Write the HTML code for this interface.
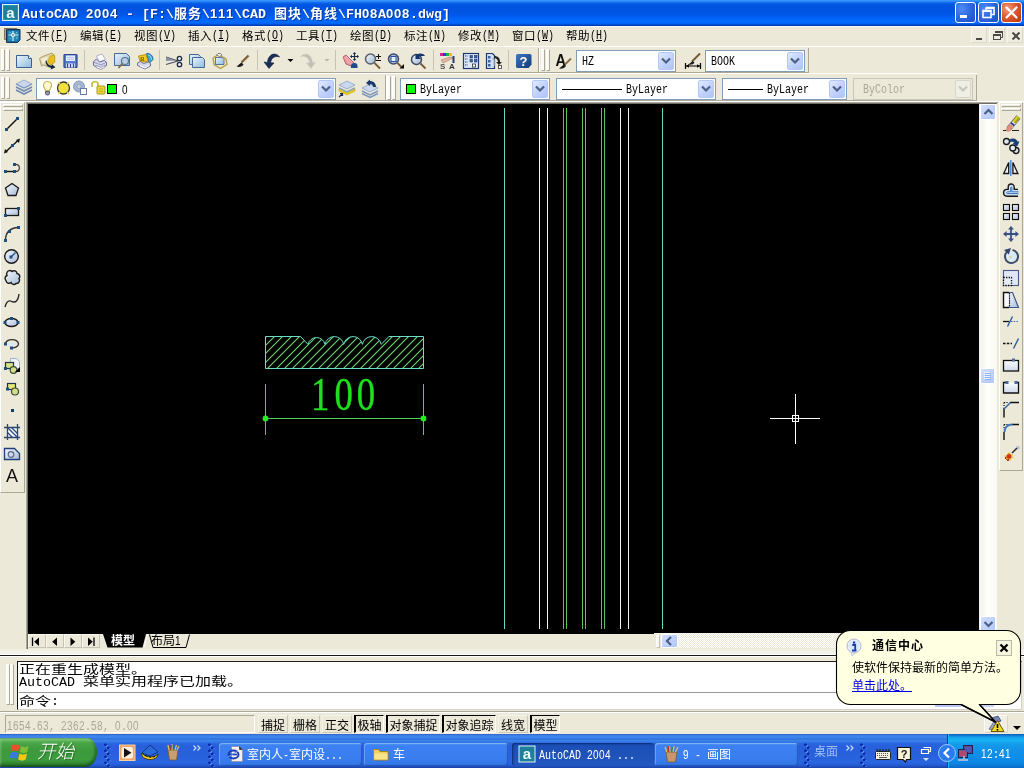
<!DOCTYPE html>
<html lang="zh-CN">
<head>
<meta charset="utf-8">
<title>AutoCAD 2004 - [F:\服务\111\CAD 图块\角线\FH08A008.dwg]</title>
<style>
*{box-sizing:border-box;margin:0;padding:0}
html,body{width:1024px;height:768px;overflow:hidden;background:#ECE9D8}
body{position:relative;font:12px/12px "Liberation Sans","Noto Sans CJK SC","WenQuanYi Zen Hei",sans-serif;color:#000;-webkit-font-smoothing:antialiased}
.a{position:absolute}
.m{font-family:"Liberation Mono","Noto Sans CJK SC","WenQuanYi Zen Hei",monospace}
svg{position:absolute;overflow:visible}
/* title bar */
#title{left:0;top:0;width:1024px;height:26px;background:linear-gradient(to bottom,#3c97ff 0px,#3391fd 1px,#1470f0 2.500px,#0458e4 4px,#0054e0 6px,#0054e1 11px,#0057e8 14px,#005ef4 17px,#0467fd 20px,#066bff 22px,#0462f6 23.500px,#0050d6 24.500px,#003cb4 25.500px,#0036aa 26px)}
#title .t{left:22px;top:5px;height:16px;line-height:16px;color:#fff;font-weight:bold;font-size:13.33px;white-space:pre;letter-spacing:0;text-shadow:1px 1px 0 rgba(10,30,100,.6)}
#title .t b{font-size:13px;letter-spacing:1px;font-weight:bold;font-family:"Noto Sans CJK SC",sans-serif}
.tb{top:2px;width:21px;height:21px;border-radius:3px;border:1px solid #fff;background:radial-gradient(circle at 30% 30%,#4f8bf5 0%,#2a62e0 55%,#1f4fc5 100%)}
.tb.x{background:radial-gradient(circle at 30% 30%,#f0a080 0%,#e0572f 45%,#c03010 100%)}
/* menu */
#menu{left:0;top:26px;width:1024px;height:20px;background:#ECE9D8}
#menu .i{top:4px;height:12px;line-height:12px;white-space:pre;font-size:11.500px;letter-spacing:.5px}
#menu .i .l{position:relative;top:-1px}
#menu .i u{text-decoration:underline;text-underline-offset:1px}
.l,.tl{display:inline-block;font-family:"Liberation Mono",monospace;font-size:12px;letter-spacing:0;transform:scaleX(.8333);transform-origin:0 50%;white-space:pre}
/* toolbars */
.bar{background:#ECE9D8}
.hl{background:#fff}
.sh{background:#ACA899}
.grip{width:4px;border-left:1px solid #fff;border-top:1px solid #fff;border-right:1px solid #ACA899;border-bottom:1px solid #ACA899;background:#FAF9F4}
.sep{width:1px;background:#C5C2B8}
.combo{background:#fff;border:1px solid #7F9DB9;height:22px}
.combo .btn{right:1px;top:1px;width:16px;height:18px;border-radius:2px;border:1px solid #B4C8F5;background:linear-gradient(135deg,#E1EAFE 0%,#C3D3FD 50%,#AFC4F7 100%)}
.combo .tx{top:5px;height:12px;line-height:12px;white-space:pre}
.combo.dis{background:#ECE9D8;border-color:#C9C7BA}
.combo.dis .btn{background:#F0EFE6;border-color:#D8D6C8}
.combo.dis .tx{color:#ACA899}
.mdi{top:1px;width:16px;height:16px;background:#EFEDE0;border:1px solid #F8F7F0;border-right-color:#DCD9C9;border-bottom-color:#DCD9C9}
.sbb{width:16px;height:16px;border-radius:2px;border:1px solid #fff;box-shadow:inset -1px -1px 0 #B4C8F5;background:linear-gradient(135deg,#D2DEFD 0%,#C3D3FD 50%,#B5C8F8 100%)}
.tnav{top:634px;width:18px;height:14px;border:1px solid #F8F7F0;border-right-color:#C5C2B8;border-bottom-color:#C5C2B8;background:#ECE9D8}
.cmd{height:12px;line-height:12px;white-space:pre;font-size:12px;letter-spacing:0;transform:scaleX(1.3333);transform-origin:0 50%}
.cml{height:13px;line-height:13px;white-space:pre;font-size:13.33px;font-family:"Liberation Mono",monospace}
.sbtn{top:715px;height:18px;line-height:12px;padding-top:4px;text-align:center;white-space:pre;font-size:12px;border:1px solid #F4F3EC;border-right-color:#C9C6B6;border-bottom-color:#C9C6B6;background:#ECE9D8}
.sbtn.on{border:1px solid #000;border-right-color:#fff;border-bottom-color:#fff;border-left-width:2px;padding-top:4px}
#task{left:0;top:734px;width:1024px;height:34px;background:linear-gradient(to bottom,#2b60c8 0px,#3a7ee6 1.500px,#3f88ee 3px,#3a80e8 4px,#2f70de 5px,#3a82ea 6.500px,#3279e6 8px,#2a66de 9.500px,#2860dc 12px,#2860dc 20px,#2a64de 28px,#2862dc 30px,#2254c8 32px,#1a40a6 34px)}
#start{left:0;top:4px;width:97px;height:29px;border-radius:0 10px 12px 0/0 14px 14px 0;background:linear-gradient(to bottom,#2f8a2f 0%,#62b85c 7%,#48a446 18%,#3c9a3c 45%,#3d9c3d 75%,#318431 92%,#266c26 100%);box-shadow:inset -2px -2px 3px rgba(0,40,0,.45),inset 1px 2px 2px rgba(255,255,255,.25)}
.dots{top:9px;width:7px;height:24px;background:radial-gradient(circle at 1.500px 1.700px,#0c2aa8 0,#0c2aa8 1.100px,transparent 1.600px) 0 0/7px 6px,radial-gradient(circle at 4.300px 4.800px,#0c2aa8 0,#0c2aa8 1.100px,transparent 1.600px) 0 0/7px 6px,radial-gradient(circle at 2.600px 2.800px,#5b9cf4 0,#5b9cf4 .9px,transparent 1.400px) 0 0/7px 6px,radial-gradient(circle at 5.400px 5.900px,#5b9cf4 0,#5b9cf4 .9px,transparent 1.400px) 0 0/7px 6px}
.tbtn{top:9px;height:23px;border-radius:3px;background:linear-gradient(to bottom,#5a9af0 0%,#3c81f3 12%,#3a7ef0 60%,#3276e6 100%);box-shadow:inset 1px 1px 0 rgba(255,255,255,.25),inset -1px -1px 1px rgba(0,0,60,.3)}
.tbtn.act{background:linear-gradient(to bottom,#1a4fb8 0%,#1e52b7 50%,#2258c0 100%);box-shadow:inset 1px 1px 2px rgba(0,0,40,.5)}
.tt{top:6px;height:12px;line-height:12px;font-size:12px;color:#fff;white-space:pre}
#root{position:absolute;left:0;top:0;width:1024px;height:768px;overflow:hidden;will-change:transform;background:#ECE9D8}
.d{font-family:"Liberation Sans",sans-serif;font-style:normal;letter-spacing:.53px;font-kerning:none}
#title .t .d{font-size:13px;letter-spacing:.77px}
</style>
</head>
<body>
<div id="root">
<!-- ================= TITLE BAR ================= -->
<div id="title" class="a">
  <svg style="left:2px;top:4px" width="17" height="17" viewBox="0 0 17 17">
    <rect x="0.5" y="0.5" width="16" height="16" fill="#1d7f9a" stroke="#dff4f8"/>
    <rect x="1.5" y="1.5" width="14" height="14" fill="none" stroke="#2a93ad"/>
    <text x="8.5" y="13.5" text-anchor="middle" font-family="Liberation Sans,sans-serif" font-weight="bold" font-size="15" fill="#eefafa">a</text>
  </svg>
  <div class="a t m">AutoCAD <i class="d">2004</i> - [F:\<b>服务</b>\<i class="d">111</i>\CAD <b>图块</b>\<b>角线</b>\FH<i class="d">08</i>A<i class="d">008</i>.dwg]</div>
  <div class="a tb" style="left:955px"><svg width="19" height="19" viewBox="0 0 19 19"><rect x="4" y="12" width="7" height="3" fill="#fff"/></svg></div>
  <div class="a tb" style="left:978px"><svg width="19" height="19" viewBox="0 0 19 19"><path d="M7 4.5h8v7h-2.5M7 4.5v3" fill="none" stroke="#fff" stroke-width="1.6"/><rect x="4" y="7.5" width="8" height="7" fill="none" stroke="#fff" stroke-width="1.6"/><rect x="4" y="7" width="8" height="2" fill="#fff"/><rect x="7" y="4" width="8" height="2" fill="#fff"/></svg></div>
  <div class="a tb x" style="left:1001px"><svg width="19" height="19" viewBox="0 0 19 19"><path d="M4.5 4.5l10 10M14.5 4.5l-10 10" stroke="#fff" stroke-width="2.2" stroke-linecap="round"/></svg></div>
</div>
<!-- ================= MENU BAR ================= -->
<div id="menu" class="a">
  <div class="a" style="left:0;top:0;width:1024px;height:1px;background:#F7F6F2"></div>
  <svg style="left:4px;top:2px" width="17" height="16" viewBox="0 0 17 16">
    <path d="M.5 .5h12.500v11h-12.500z" fill="#b8a888" stroke="#7a6a50" stroke-width=".9"/>
    <path d="M2.500 1.500h13.500v10.500l-2.500 2.500h-11z" fill="#1d6a9c" stroke="#15365e" stroke-width="1"/>
    <path d="M4 3h10.500v8.500l-1.500 1.500h-9z" fill="#2387b4"/>
    <path d="M9 3v10M4.500 7h10" stroke="#d8f4ff" stroke-width="1.100"/>
    <circle cx="9" cy="7" r="2" fill="#eafaff"/><circle cx="9" cy="7" r=".8" fill="#0a2a4a"/>
    <path d="M5.500 4.500h1M12 4.500h1M5.500 10.500h1M12 10.500l1.500-1" stroke="#7fd0f0" stroke-width="1"/>
  </svg>
  <div class="a i" style="left:26px">文件<span class="l">(<u>F</u>)</span></div>
  <div class="a i" style="left:80px">编辑<span class="l">(<u>E</u>)</span></div>
  <div class="a i" style="left:134px">视图<span class="l">(<u>V</u>)</span></div>
  <div class="a i" style="left:188px">插入<span class="l">(<u>I</u>)</span></div>
  <div class="a i" style="left:242px">格式<span class="l">(<u>O</u>)</span></div>
  <div class="a i" style="left:296px">工具<span class="l">(<u>T</u>)</span></div>
  <div class="a i" style="left:350px">绘图<span class="l">(<u>D</u>)</span></div>
  <div class="a i" style="left:404px">标注<span class="l">(<u>N</u>)</span></div>
  <div class="a i" style="left:458px">修改<span class="l">(<u>M</u>)</span></div>
  <div class="a i" style="left:512px">窗口<span class="l">(<u>W</u>)</span></div>
  <div class="a i" style="left:566px">帮助<span class="l">(<u>H</u>)</span></div>
  <!-- MDI child buttons -->
  <div class="a mdi" style="left:971px"><svg width="16" height="16" viewBox="0 0 16 16"><rect x="4" y="10" width="6" height="2" fill="#4a4a44"/></svg></div>
  <div class="a mdi" style="left:989px"><svg width="16" height="16" viewBox="0 0 16 16"><path d="M5.5 3.5h7v6h-2" fill="none" stroke="#4a4a44"/><rect x="5" y="3" width="8" height="2" fill="#4a4a44"/><rect x="3.5" y="6.5" width="7" height="5" fill="none" stroke="#4a4a44"/><rect x="3" y="6" width="8" height="2" fill="#4a4a44"/></svg></div>
  <div class="a mdi" style="left:1007px"><svg width="16" height="16" viewBox="0 0 16 16"><path d="M4.5 4.5l7 7M11.5 4.5l-7 7" stroke="#4a4a44" stroke-width="2"/></svg></div>
</div>
<!-- ================= TOOLBAR ROW 1 ================= -->
<div class="a hl" style="left:0;top:46px;width:1024px;height:1px"></div>
<div class="a sh" style="left:0;top:72px;width:809px;height:1px"></div>
<div class="a hl" style="left:0;top:73px;width:977px;height:1px"></div>
<div class="a sh" style="left:538px;top:48px;width:1px;height:24px"></div>
<div class="a hl" style="left:539px;top:48px;width:1px;height:24px"></div>
<div class="a sh" style="left:808px;top:48px;width:1px;height:25px"></div>
<div class="a grip" style="left:1px;top:49px;height:22px"></div>
<div class="a grip" style="left:6px;top:49px;height:22px"></div>
<div class="a grip" style="left:541px;top:49px;height:22px"></div>
<div class="a grip" style="left:546px;top:49px;height:22px"></div>
<div class="a sep" style="left:84px;top:50px;height:20px"></div>
<div class="a sep" style="left:159px;top:50px;height:20px"></div>
<div class="a sep" style="left:257px;top:50px;height:20px"></div>
<div class="a sep" style="left:335px;top:50px;height:20px"></div>
<div class="a sep" style="left:433px;top:50px;height:20px"></div>
<div class="a sep" style="left:508px;top:50px;height:20px"></div>
<svg style="left:0;top:46px" width="820" height="28" viewBox="0 46 820 28">
<defs>
  <linearGradient id="gPage" x1="0" y1="0" x2="1" y2="1"><stop offset="0" stop-color="#eaf4fb"/><stop offset="1" stop-color="#8dbbdc"/></linearGradient>
  <linearGradient id="gLens" x1="0" y1="0" x2="1" y2="1"><stop offset="0" stop-color="#f4f8fc"/><stop offset="1" stop-color="#9fb6d0"/></linearGradient>
  <linearGradient id="gHelp" x1="0" y1="0" x2="1" y2="1"><stop offset="0" stop-color="#3f78c0"/><stop offset="1" stop-color="#123a78"/></linearGradient>
</defs>
<!-- new -->
<path d="M16.5 55.5h12l3 3v9h-15z" fill="url(#gPage)" stroke="#3c5f94"/>
<path d="M28.5 55.5v3h3" fill="#fff" stroke="#3c5f94"/>
<!-- open -->
<path d="M39.500 58.500l3-2 9.500-3.500 2.500 2.500v6.500l-6 5-5-2-2 1z" fill="#ded3a8" stroke="#a89a68" stroke-width=".9"/>
<path d="M41 59l7-2.500-2 5.500-3 2z" fill="#f3efdc"/>
<path d="M50 56.500l4-2 .8 1.500v6l-4.300 3.500-2.500-4z" fill="#e6bf1c" stroke="#b8960e" stroke-width=".6"/>
<path d="M46.500 60.500c.5 3 2 5 5 5.500l.3-1.800 3.700 3-4.700 2.300.3-1.800c-3.500-.5-5.500-3.500-5.600-7z" fill="#13233a"/>
<!-- save -->
<rect x="64" y="54.500" width="13" height="13" rx=".8" fill="#5679cc" stroke="#2f4690" stroke-width="1.200"/>
<rect x="66" y="55.500" width="9" height="5.500" fill="#e9f1fb"/>
<path d="M67 57.300h7M67 59.300h7" stroke="#a9c0e2" stroke-width=".9"/>
<rect x="66" y="63.500" width="9" height="4" fill="#e3ecf9"/>
<path d="M67.500 63.500v4M70.500 64v3.500M73.500 63.500v4" stroke="#2f4690" stroke-width="1.300"/>
<!-- print -->
<path d="M96.500 56l5.500-2 3.500 5.500-6 2.500z" fill="#fdfdff" stroke="#9ea2c4" stroke-width=".8"/>
<path d="M93.500 61.500l3-2.500 3 3 5-1.500 2 2v3l-5.500 3.500-7.500-3.500z" fill="#d6d9ee" stroke="#62658f" stroke-width=".9"/>
<path d="M93.500 62l7.500 3 5.500-3" fill="none" stroke="#8083ab" stroke-width=".8"/>
<path d="M96 65.500l5 2 4-2.500v2l-4 2.500-5-2z" fill="#fff" stroke="#7a7da5" stroke-width=".7"/>
<!-- preview -->
<path d="M114.500 53.500h12l3 3v9h-15z" fill="url(#gPage)" stroke="#47699a"/>
<circle cx="125" cy="61" r="3.500" fill="#b9cde3" stroke="#5a7599" stroke-width="1.200"/>
<path d="M122.500 63.500l-4 4.500" stroke="#8a6a3a" stroke-width="1.800"/>
<!-- publish -->
<path d="M146.500 53.500c4-.5 6.500 2.500 6.500 6l-4 4z" fill="#3ba6d6" stroke="#1d6396" stroke-width=".9"/>
<path d="M148 55c2 .5 3.500 2 3.500 4.500" fill="none" stroke="#9adcf4" stroke-width="1"/>
<path d="M138.500 56l7.500-1.500 2 6.500-7.500 1.500z" fill="#f4cb1e" stroke="#b48e0c" stroke-width=".9"/>
<text x="140.200" y="61.300" font-family="Liberation Sans,sans-serif" font-size="6" font-weight="bold" fill="#7a5c00">B</text>
<path d="M137.500 63l3-1.500 3 2 5-1.500 2 1.500v2.500l-5.500 3-7.500-3.500z" fill="#d6d9ee" stroke="#62658f" stroke-width=".9"/>
<path d="M140 66l5 2 4-2.500" fill="none" stroke="#fff" stroke-width="1"/>
<!-- cut -->
<path d="M166 57l12 4M166 64.500l12-3.500" stroke="#4a4e68" stroke-width="1.300"/>
<path d="M166 57l9 3.500-9 .5z" fill="#8a8ea8"/>
<circle cx="179.500" cy="58.500" r="2.200" fill="none" stroke="#1c2a50" stroke-width="1.300"/>
<circle cx="179.500" cy="64.500" r="2.200" fill="none" stroke="#1c2a50" stroke-width="1.300"/>
<!-- copy -->
<path d="M189.500 54.500h9l2 2v8h-11z" fill="url(#gPage)" stroke="#47699a"/>
<path d="M192.500 57.500h10l2 2v8h-12z" fill="url(#gPage)" stroke="#47699a"/>
<!-- paste -->
<path d="M213 58l5.500-3.500 7.500 4.500 1 5.500-6.500 4-6.500-4z" fill="#efe7c4" stroke="#b59c3e" stroke-width="1.300"/>
<path d="M216.500 55l1.500-1.500h2.500l1.500 1.500-2.500 1.500z" fill="#f4f4f4" stroke="#6a6a6a" stroke-width=".8"/>
<path d="M215.500 57.500h6.500l2 2v5h-8.500z" fill="url(#gPage)" stroke="#4a6a9a" stroke-width=".9"/>
<!-- match prop -->
<path d="M248.500 55.500l-7 7" stroke="#7a5a34" stroke-width="2.200"/>
<path d="M249.300 56.300l-6 6" stroke="#c9a572" stroke-width=".8"/>
<path d="M236.500 66.500c2-1 3-3 5-4l2 2c-1 2-4 3-7 2z" fill="#1a1a1a"/>
<!-- undo -->
<path d="M279.500 57c-2-3-6-4-9-1.500c-2 2-3 4-3 7l-3.500-.5 5 6.500 5-5.500-3.300-.3c0-2 1-4 2.500-5c2-1.500 4.500-1.500 6.300-.7z" fill="#163058" stroke="#0d1f3c" stroke-width=".6"/>
<path d="M287.500 59h6l-3 3z" fill="#000"/>
<!-- redo -->
<path d="M300.500 57c2-3 6-4 9-1.500c2 2 3 4 3 7l3.500-.5-5 6.500-5-5.500 3.300-.3c0-2-1-4-2.500-5c-2-1.500-4.500-1.500-6.300-.7z" fill="#c2c0b6" stroke="#d8d6cc" stroke-width=".6"/>
<path d="M324.500 59h5l-2.500 2.500z" fill="#b8b6aa"/>
<!-- pan -->
<path d="M343 57l3-2 8 8-3 3-5-2z" fill="#e89aa0" stroke="#b86068"/>
<path d="M344 57.500l6 6M346 56l5.500 6" stroke="#f5c0c4" stroke-width=".8"/>
<path d="M351 66c0-2 1.500-3 3.500-3s3 1 3 3v2h-6.500z" fill="#1f4a90"/>
<path d="M354.500 53v7M351 56.500h7" stroke="#1a2a4a" stroke-width="1.200"/>
<path d="M354.500 52l1.700 2h-3.400zM354.500 61l1.700-2h-3.400zM350 56.500l2-1.700v3.400zM359 56.500l-2-1.700v3.400z" fill="#1a2a4a"/>
<!-- zoom realtime -->
<circle cx="370.500" cy="59" r="5" fill="url(#gLens)" stroke="#5a5f6e" stroke-width="1.500"/>
<path d="M374.500 63l5.500 5.500" stroke="#7a5a30" stroke-width="1.800"/>
<path d="M376 56.500h5M378.500 54v5M376 60.500h5" stroke="#111" stroke-width="1"/>
<!-- zoom window -->
<circle cx="393.500" cy="59" r="5" fill="#aac0dc" stroke="#3c4a66" stroke-width="1.500"/>
<rect x="391" y="56.500" width="5" height="5" fill="#e8f0fb" stroke="#2a4f9a"/>
<path d="M397.500 63l4 4" stroke="#7a5a30" stroke-width="1.800"/>
<path d="M404 64v4.500h-4.500z" fill="#000"/>
<!-- zoom previous -->
<circle cx="416.500" cy="59.500" r="5" fill="url(#gLens)" stroke="#3c4a66" stroke-width="1.500"/>
<path d="M425 56c-2-3-6-3-8-1l-1.500-1.500v5.500h5.500l-2-2c2-1.500 4-1 6-1z" fill="#15346a"/>
<path d="M420.500 63.500l5 5" stroke="#7a5a30" stroke-width="1.800"/>
<!-- properties -->
<rect x="440" y="53" width="3" height="3" fill="#e0208a"/><rect x="443" y="53" width="3" height="3" fill="#3030e0"/><rect x="446" y="53" width="3" height="3" fill="#20b040"/><rect x="449" y="53" width="3" height="3" fill="#e8c020"/>
<path d="M441 60l9-3 3 1-10 5z" fill="#e8b8a0" stroke="#a07860" stroke-width=".6"/>
<path d="M453.500 56v7" stroke="#2a3a6a" stroke-width="2"/>
<text x="440" y="69" font-family="Liberation Sans,sans-serif" font-size="8" font-weight="bold" fill="#555">S</text>
<text x="449" y="69" font-family="Liberation Sans,sans-serif" font-size="8" font-weight="bold" fill="#333">A</text>
<!-- design center -->
<rect x="463.500" y="53.500" width="15" height="15" fill="#dfeaf8" stroke="#1e3a6e" stroke-width="1.200"/>
<path d="M465 56h3M465 59h3M465 62h3M465 65h3" stroke="#1e3a6e" stroke-width="1.200" stroke-dasharray="1.500 1"/>
<rect x="470" y="55.500" width="2.500" height="2.500" fill="#3a64a8" stroke="#1e3a6e" stroke-width=".6"/><rect x="474.500" y="55.500" width="2.500" height="2.500" fill="#3a64a8" stroke="#1e3a6e" stroke-width=".6"/>
<rect x="470" y="59.500" width="2.500" height="2.500" fill="#3a64a8" stroke="#1e3a6e" stroke-width=".6"/><rect x="474.500" y="59.500" width="2.500" height="2.500" fill="#3a64a8" stroke="#1e3a6e" stroke-width=".6"/>
<rect x="472.500" y="64" width="3" height="3" fill="#fff" stroke="#333" stroke-width=".8"/>
<!-- tool palettes -->
<path d="M486.500 53.500h6l2 2v13h-8z" fill="#cfe0f4" stroke="#1e3a6e" stroke-width="1.200"/>
<rect x="488" y="56" width="2.500" height="2.500" fill="#3a64a8"/><rect x="488" y="60" width="2.500" height="2.500" fill="#3a64a8"/><rect x="488" y="64" width="2.500" height="2.500" fill="#3a64a8"/>
<path d="M492.500 59h2v7" stroke="#7a8aa8" fill="none"/>
<path d="M494 56c4 0 6 2 6 6h2l-3 3-3-3h2c0-2-1.500-4-4-4z" fill="#222"/>
<rect x="498.500" y="65.500" width="3" height="3" fill="#fff" stroke="#333" stroke-width=".8"/>
<!-- help -->
<path d="M517.500 54h12.500a1.500 1.500 0 0 1 1.500 1.500v9l-3 3.500h-11a1.500 1.500 0 0 1-1.500-1.500v-11a1.500 1.500 0 0 1 1.500-1.500z" fill="url(#gHelp)"/>
<text x="523.500" y="66" text-anchor="middle" font-family="Liberation Sans,sans-serif" font-size="13" font-weight="bold" fill="#fff">?</text>
<!-- text style -->
<text x="555.500" y="65.500" font-family="Liberation Sans,sans-serif" font-size="17" font-weight="bold" fill="#111" textLength="10.500" lengthAdjust="spacingAndGlyphs">A</text>
<path d="M571 58.500l-6 6" stroke="#8a6a40" stroke-width="1.800"/>
<path d="M559 68.500c2-1 3-3 5-4l2 1.500c-1 2-4 3-7 2.500z" fill="#1a1a1a"/>
<!-- dim style -->
<path d="M700 53.500l-8 8" stroke="#7a5a34" stroke-width="2"/>
<path d="M688 64.500c2-1 3-2 4.500-3.500l2 1.500c-1 2-3.500 2.500-6.500 2z" fill="#1a1a1a"/>
<path d="M685.500 63v6M700.500 63v6M685.500 66h15" stroke="#000" stroke-width="1.200" fill="none"/>
<path d="M686 66l3-1.800v3.600zM700 66l-3-1.800v3.600z" fill="#000"/>
</svg>
<!-- combos row 1 -->
<div class="a combo" style="left:576px;top:50px;width:100px"><div class="a tx l" style="left:5px">HZ</div><div class="a btn"><svg width="14" height="16" viewBox="0 0 14 16"><path d="M3 5.500l4 4 4-4" fill="none" stroke="#4D6185" stroke-width="2.200"/></svg></div></div>
<div class="a combo" style="left:705px;top:50px;width:100px"><div class="a tx l" style="left:5px">BOOK</div><div class="a btn"><svg width="14" height="16" viewBox="0 0 14 16"><path d="M3 5.500l4 4 4-4" fill="none" stroke="#4D6185" stroke-width="2.200"/></svg></div></div>
<!-- ================= TOOLBAR ROW 2 ================= -->
<div class="a sh" style="left:0;top:100px;width:977px;height:1px"></div>
<div class="a hl" style="left:0;top:101px;width:1024px;height:1px"></div>
<div class="a sh" style="left:385px;top:75px;width:1px;height:25px"></div>
<div class="a hl" style="left:386px;top:75px;width:1px;height:25px"></div>
<div class="a sh" style="left:976px;top:75px;width:1px;height:26px"></div>
<div class="a grip" style="left:1px;top:77px;height:22px"></div>
<div class="a grip" style="left:6px;top:77px;height:22px"></div>
<div class="a grip" style="left:387px;top:76px;height:24px"></div>
<div class="a grip" style="left:392px;top:76px;height:24px"></div>
<svg style="left:0;top:74px" width="400" height="28" viewBox="0 74 400 28">
<!-- layers -->
<path d="M16 84l8-4 8 4-8 4z" fill="#c9d8ee" stroke="#8aa0c4" stroke-width=".8"/>
<path d="M16 87l8 4 8-4M16 90l8 4 8-4" fill="none" stroke="#6f88b4" stroke-width="1.600"/>
<path d="M16 84l8 4 8-4" fill="none" stroke="#7f97c0" stroke-width="1.200"/>
</svg>
<div class="a combo" style="left:36px;top:78px;width:300px">
  <svg style="left:-1px;top:-5px" width="140" height="28" viewBox="36 74 140 28">
    <path d="M47.500 81.500c-2.500 0-4 2-4 4c0 2 1.500 3 2 5h4c.5-2 2-3 2-5c0-2-1.500-4-4-4z" fill="#fffbd0" stroke="#c8b45a" stroke-width="1.200"/>
    <path d="M45.500 91.500h4v2a2 1.500 0 0 1-4 0z" fill="#9098b0" stroke="#3a4058" stroke-width=".8"/>
    <circle cx="63.500" cy="88" r="6" fill="#f2e040" stroke="#3a3a3a" stroke-width="1.300"/>
    <path d="M58 82l2 2M69 82l-2 2M58 94l2-2M69 94l-2-2" stroke="#d8e060" stroke-width="1.200"/>
    <circle cx="79" cy="86.500" r="5.500" fill="#a6b6cc" stroke="#8a9cb8"/>
    <circle cx="79" cy="86.500" r="2" fill="#c8d4e4" stroke="#8fa4c0" stroke-width=".8"/>
    <rect x="80.500" y="88.500" width="6" height="6" fill="#fff" stroke="#6a7ca0"/>
    <path d="M92 87v-3c0-3 6-3 6 0v2" fill="none" stroke="#c8b830" stroke-width="1.600"/>
    <rect x="97" y="86" width="8" height="8" rx="1" fill="#e8d840" stroke="#a89818"/>
    <path d="M99 89h4M99 91.500h4" stroke="#b8a820" stroke-width=".8"/>
    <rect x="107.500" y="84.500" width="9" height="9" fill="#00ff00" stroke="#000"/>
  </svg>
  <div class="a tx l" style="left:85px"><i class="d">0</i></div>
  <div class="a btn"><svg width="14" height="16" viewBox="0 0 14 16"><path d="M3 5.500l4 4 4-4" fill="none" stroke="#4D6185" stroke-width="2.200"/></svg></div>
</div>
<svg style="left:336px;top:74px" width="50" height="28" viewBox="336 74 50 28">
  <path d="M339 85l8-4 8 4-8 4z" fill="#c9d8ee" stroke="#8aa0c4" stroke-width=".8"/>
  <path d="M339 88l8 4 8-4" fill="none" stroke="#8aa0c4" stroke-width="1.500"/>
  <path d="M339 91l8 4 8-4v-2l-8 4-8-4z" fill="#e8d020" stroke="#c0a810" stroke-width=".6"/>
  <path d="M339 97l3.500-3.500M342.500 96v-2.500h-2.500" stroke="#1a2a5a" stroke-width="1.200" fill="none"/>
  <path d="M362 88l8-4 8 4-8 4z" fill="#c9d8ee" stroke="#8aa0c4" stroke-width=".8"/>
  <path d="M362 91l8 4 8-4M362 93.500l8 4 8-4" fill="none" stroke="#7f97c0" stroke-width="1.400"/>
  <path d="M376 87c0-4-3-6-6-6l0-1.500-4 3.500 4 3v-2c2 0 3 1 3 3z" fill="#1a3a6a"/>
</svg>
<div class="a combo" style="left:400px;top:78px;width:150px">
  <div class="a" style="left:5px;top:5px;width:10px;height:10px;background:#00ff00;border:1px solid #000"></div>
  <div class="a tx l" style="left:19px">ByLayer</div>
  <div class="a btn"><svg width="14" height="16" viewBox="0 0 14 16"><path d="M3 5.500l4 4 4-4" fill="none" stroke="#4D6185" stroke-width="2.200"/></svg></div>
</div>
<div class="a combo" style="left:556px;top:78px;width:160px">
  <div class="a" style="left:5px;top:10px;width:60px;height:1px;background:#000"></div>
  <div class="a tx l" style="left:69px">ByLayer</div>
  <div class="a btn"><svg width="14" height="16" viewBox="0 0 14 16"><path d="M3 5.500l4 4 4-4" fill="none" stroke="#4D6185" stroke-width="2.200"/></svg></div>
</div>
<div class="a combo" style="left:722px;top:78px;width:125px">
  <div class="a" style="left:5px;top:10px;width:35px;height:1px;background:#000"></div>
  <div class="a tx l" style="left:44px">ByLayer</div>
  <div class="a btn"><svg width="14" height="16" viewBox="0 0 14 16"><path d="M3 5.500l4 4 4-4" fill="none" stroke="#4D6185" stroke-width="2.200"/></svg></div>
</div>
<div class="a combo dis" style="left:853px;top:78px;width:120px">
  <div class="a tx l" style="left:9px">ByColor</div>
  <div class="a btn"><svg width="14" height="16" viewBox="0 0 14 16"><path d="M3 5.500l4 4 4-4" fill="none" stroke="#C9C7BA" stroke-width="2.200"/></svg></div>
</div>
<!-- ================= DRAWING AREA ================= -->
<div class="a sh" style="left:26px;top:102px;width:972px;height:1px"></div>
<div class="a" style="left:26px;top:103px;width:971px;height:1px;background:#716F64"></div>
<div class="a sh" style="left:26px;top:102px;width:1px;height:547px"></div>
<div class="a" style="left:27px;top:103px;width:1px;height:546px;background:#716F64"></div>
<div class="a" style="left:28px;top:104px;width:951px;height:530px;background:#000;overflow:hidden">
<svg style="left:0;top:0" width="951" height="530" viewBox="28 104 951 530">
  <g shape-rendering="crispEdges" stroke-width="1">
    <path d="M504.500 108v521M662.500 108v521" stroke="#6cd6c8"/>
    <path d="M539.500 108v521M547.500 108v521M620.500 108v521M628.500 108v521" stroke="#f4f4f4"/>
    <path d="M563.500 108v521M566.500 108v521M582.500 108v521M585.500 108v521M601.500 108v521M604.500 108v521" stroke="#5cc05c"/>
  </g>
  <!-- hatched profile -->
  <clipPath id="prof"><path d="M265.500 336.500H300.500L308 344.400A8.700 8.700 0 0 1 325 344.400A9.500 9.500 0 0 1 343.700 344.400A9.500 9.500 0 0 1 362.400 344.400A9.500 9.500 0 0 1 381.100 344.400L389 336.500H423.500V368.500H265.500Z"/></clipPath>
  <g clip-path="url(#prof)" stroke="#70d470" stroke-width="1.100" fill="none">
    <path d="M230 373l42-42M238 373l42-42M246 373l42-42M255 373l42-42M263 373l42-42M272 373l42-42M280 373l42-42M288 373l42-42M297 373l42-42M305 373l42-42M314 373l42-42M322 373l42-42M330 373l42-42M339 373l42-42M347 373l42-42M356 373l42-42M364 373l42-42M372 373l42-42M381 373l42-42M389 373l42-42M398 373l42-42M406 373l42-42M414 373l42-42M423 373l42-42"/>
  </g>
  <path d="M265.500 336.500H300.500L308 344.400A8.700 8.700 0 0 1 325 344.400A9.500 9.500 0 0 1 343.700 344.400A9.500 9.500 0 0 1 362.400 344.400A9.500 9.500 0 0 1 381.100 344.400L389 336.500H423.500V368.500H265.500Z" fill="none" stroke="#6adcc8" stroke-width="1"/>
  <!-- dimension -->
  <g stroke="#4fd24f" stroke-width="1" fill="none" shape-rendering="crispEdges">
    <path d="M265.500 384v51M423.500 384v51M265 418.500h159"/>
  </g>
  <circle cx="265.500" cy="418.500" r="2.900" fill="#22ee22"/>
  <circle cx="423.500" cy="418.500" r="2.900" fill="#22ee22"/>
  <text transform="translate(0 409.800) scale(.8 1)" x="388.750 418 446.100" y="0" font-family="Liberation Serif,serif" font-size="46" fill="#1ee01e" stroke="#1ee01e" stroke-width=".4">100</text>
  <!-- crosshair -->
  <g stroke="#fff" stroke-width="1" fill="none" shape-rendering="crispEdges">
    <path d="M770 418.500h50M795.500 394v50"/>
    <rect x="792.500" y="415.500" width="6" height="6"/>
  </g>
</svg>
</div>
<!-- ================= LEFT DRAW PALETTE ================= -->
<div class="a" style="left:0;top:102px;width:25px;height:391px;border-top:1px solid #fff;border-left:1px solid #fff;border-right:1px solid #ACA899;border-bottom:1px solid #ACA899"></div>
<div class="a" style="left:3px;top:104px;width:20px;height:3px;border-top:1px solid #fff;border-left:1px solid #fff;border-bottom:1px solid #ACA899;border-right:1px solid #ACA899"></div>
<div class="a" style="left:3px;top:108px;width:20px;height:3px;border-top:1px solid #fff;border-left:1px solid #fff;border-bottom:1px solid #ACA899;border-right:1px solid #ACA899"></div>
<svg style="left:0;top:112px" width="26" height="380" viewBox="0 112 26 380">
<defs>
  <linearGradient id="gFill" x1="0" y1="0" x2="1" y2="1"><stop offset="0" stop-color="#f4f7fb"/><stop offset="1" stop-color="#a9bcd8"/></linearGradient>
  <linearGradient id="gFill2" x1="0" y1="0" x2="0" y2="1"><stop offset="0" stop-color="#fbfcfe"/><stop offset="1" stop-color="#cfd9ea"/></linearGradient>
</defs>
<g id="hdl" fill="#1d4f7e" stroke="#17406e" stroke-width=".5"></g>
<!-- line -->
<path d="M6.500 129.500l11-11" stroke="#111" stroke-width="1.400"/>
<rect x="16" y="117" width="3" height="3" fill="#1d4f7e"/><rect x="5" y="128" width="3" height="3" fill="#1d4f7e"/>
<!-- xline -->
<path d="M5.500 152l13-12" stroke="#111" stroke-width="1.400"/>
<path d="M4 153.500l1-4.500 3 3zM20 138.500l-1 4.500-3-3z" fill="#111"/>
<rect x="11" y="144" width="3" height="3" fill="#1d4f7e"/>
<!-- pline -->
<path d="M5.500 171.500h9" stroke="#111" stroke-width="1.400"/>
<path d="M15.500 164.300c5.200 0 5.200 7.400 0 7.200" fill="none" stroke="#444" stroke-width="1.300"/>
<rect x="4" y="170" width="3" height="3" fill="#1d4f7e"/><rect x="13" y="170" width="3" height="3" fill="#1d4f7e"/><rect x="13" y="163" width="3" height="3" fill="#1d4f7e"/>
<!-- polygon -->
<path d="M12 183.500l6.500 4.500-2.500 7.500h-8l-2.500-7.500z" fill="url(#gFill)" stroke="#1a1a1a" stroke-width="1.300"/>
<!-- rectangle -->
<rect x="5.500" y="208.500" width="13" height="7" fill="url(#gFill)" stroke="#1a1a1a" stroke-width="1.300"/>
<rect x="4" y="214" width="3" height="3" fill="#1d4f7e"/><rect x="17" y="207" width="3" height="3" fill="#1d4f7e"/>
<!-- arc -->
<path d="M5.500 240c0-7 4-12 13-12.500" fill="none" stroke="#333" stroke-width="1.400"/>
<rect x="4" y="239" width="3" height="3" fill="#1d4f7e"/><rect x="8" y="230" width="3" height="3" fill="#1d4f7e"/><rect x="17" y="226" width="3" height="3" fill="#1d4f7e"/>
<!-- circle -->
<circle cx="11.500" cy="256.500" r="6.800" fill="url(#gFill)" stroke="#1a1a1a" stroke-width="1.400"/>
<path d="M11 257l4.500-4.500" stroke="#1f4f8a" stroke-width="1.300"/>
<rect x="9.500" y="255.500" width="3" height="3" fill="#1f4f8a"/>
<!-- revcloud -->
<path d="M7 272.500a3 3 0 0 1 5-1a3 3 0 0 1 5 2a3 3 0 0 1 2 5a3.200 3.200 0 0 1-3 5a3 3 0 0 1-5-1a3 3 0 0 1-5-2a3 3 0 0 1 1-5a3 3 0 0 1 0-3z" fill="url(#gFill)" stroke="#1a1a1a" stroke-width="1.400"/>
<!-- spline -->
<path d="M5 307c1-4 3-7 5.500-6s4 2 6 0s2-4 2.500-7" fill="none" stroke="#222" stroke-width="1.300"/>
<!-- ellipse -->
<ellipse cx="11.500" cy="322.500" rx="6.500" ry="4" fill="url(#gFill)" stroke="#1a1a1a" stroke-width="1.400"/>
<rect x="3.500" y="321" width="3" height="3" fill="#1d4f7e"/><rect x="16.500" y="321" width="3" height="3" fill="#1d4f7e"/><rect x="10" y="317" width="3" height="3" fill="#1d4f7e"/>
<!-- ellipse arc -->
<path d="M5.500 344a6.500 4.200 0 1 1 6 4" fill="none" stroke="#333" stroke-width="1.400"/>
<ellipse cx="11.500" cy="344.500" rx="4" ry="2.200" fill="#dfe7f2"/>
<rect x="4" y="342.500" width="3" height="3" fill="#1d4f7e"/><rect x="10" y="346.500" width="3" height="3" fill="#1d4f7e"/>
<!-- insert block -->
<path d="M10.500 358.500h6l3 3v7h-9z" fill="#eef3fa" stroke="#9fb2cc"/>
<rect x="5.500" y="362.500" width="8" height="6" fill="#d6e486" stroke="#243050" stroke-width="1.200"/>
<circle cx="13.500" cy="370" r="3.300" fill="#d2de8c" stroke="#3c4a30" stroke-width="1.200"/>
<rect x="4" y="367" width="3" height="3" fill="#1d4f7e"/>
<path d="M20 367v5h-5z" fill="#000"/>
<!-- make block -->
<rect x="7.500" y="383.500" width="8" height="6" fill="#e2e870" stroke="#243050" stroke-width="1.200"/>
<circle cx="15" cy="391.500" r="3.500" fill="#d2de8c" stroke="#3c4a30" stroke-width="1.200"/>
<rect x="6" y="387.500" width="3" height="3" fill="#1d4f7e"/>
<!-- point -->
<rect x="11" y="409" width="3" height="3" fill="#163a68"/>
<!-- hatch -->
<clipPath id="hc"><rect x="8" y="428" width="9" height="9"/></clipPath>
<rect x="8" y="428" width="9" height="9" fill="#fff"/>
<g clip-path="url(#hc)"><path d="M3 428l12 12M6 426l12 12M9 425l12 12M0 430l12 12" stroke="#2c4f8a" stroke-width="1.400"/></g>
<path d="M4 427.500h16M4 437.500h16M7.500 424v16M17.500 424v16" stroke="#2c4470" stroke-width="1.300" fill="none"/>
<!-- region -->
<path d="M4.500 448.500h10l5 5v6h-15z" fill="url(#gFill)" stroke="#1f3f7a" stroke-width="1.300"/>
<circle cx="11" cy="454.500" r="2.800" fill="#d0d8e8" stroke="#566a8a" stroke-width="1.200"/>
<!-- text -->
<text x="12" y="482" text-anchor="middle" font-family="Liberation Sans,sans-serif" font-size="18" fill="#111">A</text>
</svg>
<!-- ================= RIGHT MODIFY PALETTE ================= -->
<div class="a" style="left:999px;top:102px;width:24px;height:369px;border-top:1px solid #fff;border-left:1px solid #fff;border-right:1px solid #ACA899;border-bottom:1px solid #ACA899"></div>
<div class="a" style="left:1001px;top:104px;width:20px;height:3px;border-top:1px solid #fff;border-left:1px solid #fff;border-bottom:1px solid #ACA899;border-right:1px solid #ACA899"></div>
<div class="a" style="left:1001px;top:108px;width:20px;height:3px;border-top:1px solid #fff;border-left:1px solid #fff;border-bottom:1px solid #ACA899;border-right:1px solid #ACA899"></div>
<svg style="left:998px;top:112px" width="26" height="360" viewBox="998 112 26 360">
<!-- erase -->
<path d="M1003 130.500h5M1012 130.500h7" stroke="#222" stroke-width="1"/>
<path d="M1008.500 129l10-12" stroke="#55597a" stroke-width="5.200" stroke-linecap="butt"/>
<path d="M1014 122.500l4.500-5.500" stroke="#d6cf1e" stroke-width="4.200"/>
<path d="M1014.600 123.200l4.500-5.500" stroke="#9a9a10" stroke-width="1.200"/>
<path d="M1010.500 126.600l3.500-4.100" stroke="#f6f6fb" stroke-width="4.200"/>
<path d="M1012 124.800l1.200-1.500" stroke="#30407a" stroke-width="4.400"/>
<path d="M1008 129.600l2.500-3" stroke="#e0907a" stroke-width="4.400" stroke-linecap="round"/>
<!-- copy object -->
<circle cx="1006.500" cy="141.500" r="3" fill="#dfe8f0" stroke="#1a1a1a" stroke-width="1.300"/>
<circle cx="1016" cy="150.500" r="3" fill="#d8dce4" stroke="#1a1a1a" stroke-width="1.300"/>
<circle cx="1012.800" cy="148" r="3" fill="#e4e8ee" stroke="#1a1a1a" stroke-width="1.300"/>
<path d="M1010 139.500c3.500-1.500 6.500-.5 7.500 2.500l1.500-.3-2 4.500-4-2.800 1.800-.4c-.8-1.500-2.500-2-4.800-1.200z" fill="#163f78" stroke="#163f78" stroke-width=".6"/>
<!-- mirror -->
<path d="M1010.800 160v16" stroke="#3a8ad0" stroke-width="1.400"/>
<path d="M1008.700 162.500v11h-5zM1012.900 162.500v11h5z" fill="#eef2f8" stroke="#151515" stroke-width="1.300" stroke-linejoin="miter"/>
<!-- offset -->
<path d="M1018 196.200h-11a3.400 3.400 0 0 1 0-6.800h1.200v-2.400a3 3 0 0 1 6 0v2.400h3.800" fill="#cfe6f8" stroke="#161616" stroke-width="1.400"/>
<path d="M1018.500 193.600h-11a.9 .9 0 0 1 0-1.800h3.200v-4.300a.6 .6 0 0 1 1.200 0v4.300h6.600" fill="none" stroke="#3c6fb4" stroke-width="1"/>
<!-- array -->
<rect x="1003.500" y="204.500" width="6" height="6" fill="url(#gFill)" stroke="#0c0c0c" stroke-width="1.100"/><rect x="1012.500" y="204.500" width="6" height="6" fill="url(#gFill)" stroke="#0c0c0c" stroke-width="1.100"/>
<rect x="1003.500" y="213.500" width="6" height="6" fill="url(#gFill)" stroke="#0c0c0c" stroke-width="1.100"/><rect x="1012.500" y="213.500" width="6" height="6" fill="url(#gFill)" stroke="#0c0c0c" stroke-width="1.100"/>
<!-- move -->
<rect x="1008.200" y="231.200" width="5.600" height="5.600" fill="#cfe4f6"/>
<path d="M1011 227.500v13M1004.500 234h13" stroke="#3a4e80" stroke-width="1.800"/>
<path d="M1011 226l3 3.600h-6zM1011 242l3-3.600h-6zM1003 234l3.600-3v6zM1019 234l-3.600-3v6z" fill="#3a4e80"/>
<!-- rotate -->
<circle cx="1011.500" cy="256.500" r="5" fill="#d6e9f7"/>
<path d="M1012.500 250.100a6.500 6.500 0 1 1-5.800 2" fill="none" stroke="#3b4d6b" stroke-width="2"/>
<path d="M1004 250l7-2-2.200 6.500z" fill="#34466a"/>
<circle cx="1010.500" cy="257" r="1.200" fill="#f0c070" opacity=".8"/>
<!-- scale -->
<rect x="1003.500" y="270.500" width="15" height="15" fill="#dfe6f6" stroke="#4a5a82" stroke-width="1.100"/>
<rect x="1003.500" y="277.500" width="8" height="8" fill="#e6ebf7" stroke="#0a0a0a" stroke-width="1.300" stroke-dasharray="1.300 1.300"/>
<!-- stretch -->
<path d="M1009 292.500l3.500 0 6 15h-9.500z" fill="url(#gFill)" stroke="#3a5688" stroke-width="1.200"/>
<path d="M1009 292.500h-5.500v15h5.500" fill="#f6f8fb" stroke="#111" stroke-width="1.400"/>
<path d="M1009.500 293v14" stroke="#111" stroke-width="1.200" stroke-dasharray="1.200 1.200"/>
<!-- trim -->
<path d="M1003 321.500h6" stroke="#111" stroke-width="1.300"/>
<path d="M1011 321.500h8" stroke="#2a6ab0" stroke-width="1.200" stroke-dasharray="1.500 1.200"/>
<path d="M1012.500 316.500l-5 10" stroke="#2a5a9a" stroke-width="1.400"/>
<!-- extend -->
<path d="M1003 343.500h9" stroke="#111" stroke-width="1.300" stroke-dasharray="2.500 1.300"/>
<path d="M1018.500 338.500l-5 10" stroke="#2a5a9a" stroke-width="1.400"/>
<!-- break at point -->
<rect x="1003.500" y="360.500" width="15" height="10.500" fill="url(#gFill2)" stroke="#111" stroke-width="1.300"/>
<rect x="1012" y="358.500" width="3" height="3" fill="#4a6a9a"/>
<!-- break -->
<path d="M1007 382.500h-3.500v10.500h15v-10.500h-3.500" fill="url(#gFill2)" stroke="#111" stroke-width="1.300"/>
<rect x="1005.500" y="381" width="3" height="3" fill="#4a6a9a"/><rect x="1014.500" y="381" width="3" height="3" fill="#4a6a9a"/>
<!-- chamfer -->
<path d="M1004 402.500h4" stroke="#111" stroke-width="1.200" stroke-dasharray="1.200 1.200"/>
<path d="M1004 402.500v5" stroke="#111" stroke-width="1.200" stroke-dasharray="1.200 1.200"/>
<path d="M1010 402.500h9M1004 408v9.500" stroke="#111" stroke-width="1.400" fill="none"/>
<path d="M1010.500 402.500l-6.500 6.500" stroke="#3a6aa8" stroke-width="1.600"/>
<!-- fillet -->
<path d="M1004 424.500h5M1004 424.500v5" stroke="#111" stroke-width="1.200" stroke-dasharray="1.200 1.200"/>
<path d="M1012 424.500h7M1004 432v8" stroke="#111" stroke-width="1.400" fill="none"/>
<path d="M1004.500 432c0-4.500 3-7.500 8-7.500" fill="none" stroke="#3a7ac0" stroke-width="2"/>
<!-- explode -->
<path d="M1005 458l4-5 3 3-4 5z" fill="#c83020" stroke="#8a1a10" stroke-width=".8"/>
<path d="M1009 452l1.500 2.500 2.500-.5-1 2.500 2 1.500-3 .5-.5 3-2-2.500-2.500 1 .5-3-2.500-1 3-1z" fill="#e8c020" opacity=".85"/>
<circle cx="1009" cy="456.500" r="2.200" fill="#d03018"/>
<path d="M1012 453l5-5" stroke="#222" stroke-width="1.400"/>
<path d="M1016 446.500l3.500 2M1017 450l2.500-4" stroke="#9ab0d0" stroke-width="1"/>
</svg>
<!-- ================= SCROLLBARS ================= -->
<div class="a" style="left:979px;top:104px;width:18px;height:530px;background:linear-gradient(to right,#F3F1EC 0%,#FEFEFB 45%,#FAF9F5 100%)"></div>
<div class="a sbb" style="left:980px;top:104px"><svg width="15" height="15" viewBox="0 0 15 15"><path d="M3.500 9l4-4 4 4" fill="none" stroke="#4D6185" stroke-width="2.200"/></svg></div>
<div class="a sbb" style="left:980px;top:616px"><svg width="15" height="15" viewBox="0 0 15 15"><path d="M3.500 5l4 4 4-4" fill="none" stroke="#4D6185" stroke-width="2.200"/></svg></div>
<div class="a sbb" style="left:980px;top:368px;height:16px;width:15px"><svg width="13" height="14" viewBox="0 0 13 14"><path d="M3 3.500h6M3 5.500h6M3 7.500h6M3 9.500h6" stroke="#EEF4FE" stroke-width="1"/><path d="M4 4.500h6M4 6.500h6M4 8.500h6M4 10.500h6" stroke="#8CB0F8" stroke-width="1"/></svg></div>
<!-- bottom strip: tabs + hscroll -->
<div class="a" style="left:28px;top:634px;width:968px;height:15px;background:#ECE9D8"></div>
<div class="a" style="left:654px;top:633px;width:343px;height:1px;background:#F4F3EC"></div>
<div class="a" style="left:678px;top:633px;width:301px;height:15px;background:repeating-conic-gradient(#FFFFFF 0 25%,#ECE9D8 0 50%) 0 0/2px 2px"></div>
<div class="a" style="left:656px;top:635px;width:4px;height:13px;background:#F7F6F1;border:1px solid #fff;border-right-color:#C5C2B8;border-bottom-color:#C5C2B8"></div>
<div class="a sbb" style="left:661px;top:634px;height:14px;width:17px"><svg width="15" height="12" viewBox="0 0 15 12"><path d="M9 2l-4 4 4 4" fill="none" stroke="#4D6185" stroke-width="2.200"/></svg></div>
<div class="a tnav" style="left:28px"><svg width="17" height="12" viewBox="0 0 17 12"><path d="M3.500 2.500v8.500" stroke="#000" stroke-width="1.300"/><path d="M10 2.500v8.500l-4.800-4.250z" fill="#000"/></svg></div>
<div class="a tnav" style="left:46px"><svg width="17" height="12" viewBox="0 0 17 12"><path d="M10 2.500v8.500l-4.800-4.250z" fill="#000"/></svg></div>
<div class="a tnav" style="left:64px"><svg width="17" height="12" viewBox="0 0 17 12"><path d="M5.500 2.500v8.500l4.800-4.250z" fill="#000"/></svg></div>
<div class="a tnav" style="left:82px"><svg width="17" height="12" viewBox="0 0 17 12"><path d="M5 2.500v8.500l4.800-4.250z" fill="#000"/><path d="M11 2.500v8.500" stroke="#000" stroke-width="1.300"/></svg></div>
<svg style="left:100px;top:634px" width="100" height="15" viewBox="100 634 100 15">
  <path d="M103 634h43l-3.500 13.500h-35z" fill="#000"/>
  <path d="M147.500 634l-3.500 13.500" stroke="#fff" stroke-width="1" fill="none"/>
  <path d="M149.500 634.500l3.500 13h33l3.500-13" fill="#ECE9D8" stroke="#000" stroke-width="1"/>
</svg>
<div class="a" style="left:111px;top:635px;height:12px;line-height:12px;font-weight:bold;color:#fff;white-space:pre;font-family:'Liberation Sans','Noto Sans CJK SC',sans-serif;font-size:12px">模型</div>
<div class="a" style="left:151px;top:635px;height:12px;line-height:12px;white-space:pre;font-size:12px">布局<span class="l"><i class="d">1</i></span></div>
<!-- ================= COMMAND WINDOW ================= -->
<div class="a" style="left:0;top:649px;width:1024px;height:6px;background:linear-gradient(to bottom,#F0EEE2,#F6F5EE)"></div>
<div class="a" style="left:0;top:654px;width:1024px;height:1px;background:#fff"></div>
<div class="a" style="left:0;top:655px;width:1024px;height:1px;background:#1a1a1a"></div>
<div class="a" style="left:0;top:656px;width:1024px;height:1px;background:#fff"></div>
<div class="a grip" style="left:6px;top:664px;height:41px"></div>
<div class="a grip" style="left:10px;top:664px;height:41px"></div>
<div class="a" style="left:17px;top:661px;width:1005px;height:49px;background:#fff;border-top:1px solid #202020;border-left:1px solid #101010;border-bottom:1px solid #D4D0C8;border-right:1px solid #D4D0C8"></div>
<div class="a" style="left:19px;top:692px;width:1002px;height:1px;background:#9a9a9a"></div>
<div class="a cmd" style="left:19px;top:664px">正在重生成模型。</div>
<div class="a cml" style="left:19px;top:676px">AutoCAD </div><div class="a cmd" style="left:83px;top:676px">菜单实用程序已加载。</div>
<div class="a cmd" style="left:19px;top:696px">命令</div><div class="a cml" style="left:51px;top:695px">:</div>
<div class="a" style="left:935px;top:705px;width:26px;height:2px;background:#B8C8EE"></div>
<div class="a" style="left:966px;top:705px;width:28px;height:2px;background:#C8D4F0"></div>
<!-- ================= STATUS BAR ================= -->
<div class="a" style="left:0;top:711px;width:1024px;height:1px;background:#ACA899"></div>
<div class="a" style="left:0;top:712px;width:1024px;height:1px;background:#fff"></div>
<div class="a" style="left:5px;top:715px;width:250px;height:18px;border:1px solid #ACA899;border-right-color:#fff;border-bottom-color:#fff;background:#ECE9D8"></div>
<div class="a l" style="left:7px;top:720px;height:12px;line-height:12px;color:#ACA899"><i class="d">1654</i>.<i class="d">63</i>, <i class="d">2362</i>.<i class="d">58</i>, <i class="d">0</i>.<i class="d">00</i></div>
<div class="a sbtn" style="left:258px;width:30px">捕捉</div>
<div class="a sbtn" style="left:290px;width:30px">栅格</div>
<div class="a sbtn" style="left:322px;width:30px">正交</div>
<div class="a sbtn on" style="left:354px;width:30px">极轴</div>
<div class="a sbtn on" style="left:386px;width:54px">对象捕捉</div>
<div class="a sbtn on" style="left:442px;width:54px">对象追踪</div>
<div class="a sbtn" style="left:498px;width:30px">线宽</div>
<div class="a sbtn on" style="left:530px;width:30px">模型</div>
<div class="a" style="left:984px;top:715px;width:24px;height:18px;background:#F1EFE4;border:1px solid #fff;border-right-color:#D8D5C6;border-bottom-color:#D8D5C6"></div>
<svg style="left:984px;top:714px" width="40" height="20" viewBox="984 714 40 20">
  <path d="M989 729l6-9 3 2-5 8z" fill="#9aa6c8" stroke="#5a6688" stroke-width=".8"/>
  <path d="M992 718l6-2 3 5-6 2z" fill="#7a88b8" stroke="#3a4670" stroke-width=".8"/>
  <path d="M997.500 720.500l6.500 11h-13z" fill="#f8d820" stroke="#6a5a08" stroke-width="1"/>
  <path d="M997.500 724v4" stroke="#000" stroke-width="1.600"/><rect x="996.700" y="729" width="1.600" height="1.600" fill="#000"/>
  <path d="M1013 726h8l-4 4z" fill="#000"/>
</svg>
<!-- ================= TASKBAR ================= -->
<div id="task" class="a">
  <div class="a" style="left:947px;top:0;width:77px;height:34px;background:linear-gradient(to bottom,#0c59b9 0%,#139ee9 9%,#18b5f2 18%,#139beb 30%,#1290e8 50%,#0d8dea 70%,#0d83e0 88%,#0a6acc 100%);border-left:1px solid #0f3d9a;box-shadow:inset 1px 0 0 #18bbff"></div>
  <!-- start button -->
  <div class="a" id="start"><svg style="left:10px;top:4px" width="22" height="20" viewBox="0 0 22 20">
      <path d="M2 3.500c2.500-1.500 5-1.500 7.500 0l-1.300 6c-2.500-1.500-5-1.500-7.500 0z" fill="#e8502a"/>
      <path d="M11 4c2.500 1.500 5 1.500 7.500 0l-1.300 6c-2.500 1.500-5 1.500-7.500 0z" fill="#7cc034"/>
      <path d="M.6 11c2.500-1.500 5-1.500 7.500 0l-1.300 6c-2.500-1.500-5-1.500-7.500 0z" fill="#3a7ae0"/>
      <path d="M9.500 11.500c2.500 1.500 5 1.500 7.500 0l-1.300 6c-2.500 1.500-5 1.500-7.500 0z" fill="#f4c818"/>
    </svg><div class="a" style="left:37px;top:4px;height:20px;line-height:20px;font-size:18.500px;font-weight:300;font-style:italic;color:#fff;white-space:pre;font-family:'Liberation Sans','Noto Sans CJK SC',sans-serif;text-shadow:1px 1px 1px rgba(0,0,0,.35)">开始</div></div>
  <!-- quick launch -->
  <div class="a dots" style="left:104px"></div>
  <svg style="left:118px;top:8px" width="90" height="22" viewBox="118 742 90 22">
    <rect x="119.500" y="745" width="15.500" height="15.500" fill="#f0a464" stroke="#f6cfa4" stroke-width="1"/>
    <rect x="121.500" y="747" width="11.500" height="11.500" rx="2" fill="#fbeee0"/>
    <path d="M124 748v9.500l7.500-4.700z" fill="#111"/>
    <path d="M142 753l8-8 8 7-8 4z" fill="#2a6ad8" stroke="#0a2a7a" stroke-width=".8"/>
    <path d="M142 753c2 4 12 6 16 1l-1 3c-4 4-12 3-15-1z" fill="#f4d020" stroke="#3a2a00" stroke-width=".8"/>
    <path d="M145 755l2 1.500M149 756.500l2 1M153 757l2-.5" stroke="#111" stroke-width="1"/>
    <path d="M168 750h10l-1.500 10h-7z" fill="#c8a070" stroke="#7a5a30" stroke-width=".8"/>
    <path d="M169 750l-1-5M172 750v-6M175 750l1.500-5M177 750l2-4" stroke="#d8c060" stroke-width="1.300"/>
    <path d="M170.500 750l1-5" stroke="#c03020" stroke-width="1.200"/>
    <path d="M193.500 745.500l2.500 2.500-2.500 2.500M197.500 745.500l2.500 2.500-2.500 2.500" fill="none" stroke="#c8dcff" stroke-width="1.200"/>
  </svg>
  <div class="a dots" style="left:208px"></div>
  <!-- task buttons -->
  <div class="a tbtn" style="left:219px;width:143px"><svg style="left:8px;top:2px" width="18" height="18" viewBox="0 0 18 18"><path d="M4.500 1.500h8l3 3v12h-11z" fill="#f4f0e8" stroke="#8a90a8" stroke-width=".8"/><path d="M12.500 1.500v3h3" fill="#222" stroke="#222" stroke-width=".6"/><ellipse cx="6.500" cy="9.500" rx="5" ry="4" fill="none" stroke="#1a3ab8" stroke-width="2"/><path d="M2 9.500h8" stroke="#1a3ab8" stroke-width="1.600"/><path d="M1 12l10-6" stroke="#6a9ae8" stroke-width="1"/></svg><span class="a tt" style="left:28px">室内人<span class="tl" style="margin-right:-1.200px">-</span>室内设<span class="tl">...</span></span></div>
  <div class="a tbtn" style="left:364px;width:144px"><svg style="left:8px;top:3px" width="18" height="16" viewBox="0 0 18 16"><path d="M1.500 3.500h5l1.500 2h8v8.500h-14.500z" fill="#f0d060" stroke="#a88818" stroke-width="1"/><path d="M2.500 7.500h13v6h-13z" fill="#f8e48c"/></svg><span class="a tt" style="left:29px">车</span></div>
  <div class="a tbtn act" style="left:512px;width:142px"><svg style="left:6px;top:2px" width="18" height="18" viewBox="0 0 18 18"><rect x="1" y="1" width="16" height="16" fill="#1d7f9a" stroke="#dff4f8"/><text x="9" y="14" text-anchor="middle" font-family="Liberation Sans,sans-serif" font-weight="bold" font-size="15" fill="#eefafa">a</text></svg><span class="a tt l" style="left:27px">AutoCAD <i class="d">2004</i> ...</span></div>
  <div class="a tbtn" style="left:655px;width:143px"><svg style="left:8px;top:1px" width="18" height="20" viewBox="0 0 18 20"><path d="M3 8h11l-1.500 10h-8z" fill="#c89868" stroke="#7a5a30" stroke-width=".8"/><path d="M4 8l-2-5M7 8l-.500-6M10 8l1-6M12.500 8l2.500-5" stroke="#d8c060" stroke-width="1.400"/><path d="M5.500 8l0-6" stroke="#c03020" stroke-width="1.400"/><path d="M8.500 8l1-5" stroke="#3a8a3a" stroke-width="1.400"/></svg><span class="a tt" style="left:28px"><span class="tl" style="margin-right:-4.800px"><i class="d">9</i> - </span>画图</span></div>
  <div class="a dots" style="left:804px"></div>
  <div class="a dots" style="left:860px"></div>
  <div class="a" style="left:814px;top:12px;height:12px;line-height:12px;font-size:12px;color:#9FBEF5;white-space:pre">桌面</div>
  <svg style="left:840px;top:8px" width="110" height="24" viewBox="840 742 110 24">
    <path d="M846.500 745.500l2.500 2.500-2.500 2.500M850.500 745.500l2.500 2.500-2.500 2.500" fill="none" stroke="#c8dcff" stroke-width="1.200"/>
    <rect x="875.500" y="751.500" width="15" height="8" rx="1" fill="#f4f0e0" stroke="#222" stroke-width="1"/>
    <path d="M877 753.500h12M877 755.500h12" stroke="#555" stroke-width="1" stroke-dasharray="1 1"/><path d="M879 757.500h8" stroke="#555"/>
    <path d="M877 751v-2M880 751v-2M883 751v-2M886 751v-2M889 751v-2" stroke="#111" stroke-width="1"/>
    <path d="M897.500 747.500h13v12h-4l-1 2.500-2.500-2.500h-5.500z" fill="#f8f4d8" stroke="#111" stroke-width="1.200"/>
    <text x="904" y="758" text-anchor="middle" font-family="Liberation Sans,sans-serif" font-size="11" font-weight="bold" fill="#111">?</text>
    <path d="M923.500 747.500h7v4h-2M921.500 749.500h7v4h-7z" fill="none" stroke="#fff" stroke-width="1.200"/>
    <path d="M923 758h6l-3 3z" fill="#d8e6ff"/>
    <circle cx="947" cy="753" r="8.500" fill="#2a7af0" stroke="#9cc8ff" stroke-width="1"/>
    <path d="M949 748.500l-4.500 4.500 4.500 4.500" fill="none" stroke="#fff" stroke-width="2.200"/>
  </svg>
  <svg style="left:956px;top:8px" width="20" height="22" viewBox="956 742 20 22">
    <rect x="963.500" y="745.500" width="9" height="8" fill="#5a4a8a" stroke="#222050" stroke-width="1"/>
    <rect x="958.500" y="749.500" width="9" height="8" fill="#7a5a8a" stroke="#222050" stroke-width="1"/>
    <rect x="960" y="751" width="6" height="5" fill="#b04870"/>
    <rect x="965" y="747" width="6" height="5" fill="#4a5ab0"/>
    <path d="M958 760h10M964 756v3" stroke="#c8c8d8" stroke-width="1.500"/>
  </svg>
  <div class="a l" style="left:981px;top:14px;height:12px;line-height:12px;color:#fff"><i class="d">12</i>:<i class="d">41</i></div>
</div>
<!-- ================= BALLOON ================= -->
<svg style="left:830px;top:626px" width="194" height="100" viewBox="830 626 194 100">
  <path d="M850.500 630.500h156a14 14 0 0 1 14 14v46a14 14 0 0 1-14 14h-27l16 17.500-34.500-17.500h-110.500a14 14 0 0 1-14-14v-46a14 14 0 0 1 14-14z" fill="#FFFFE1" stroke="#000" stroke-width="1.100"/>
  <path d="M979.500 704.500l16 17.500-34.500-17.500" fill="none" stroke="#000" stroke-width="1.500" stroke-linejoin="round"/>
  <circle cx="854" cy="646" r="7" fill="#eef2fc" stroke="#b0b8d0" stroke-width="1"/>
  <path d="M851 652l1 4 3-3z" fill="#dfe4f4" stroke="#b0b8d0" stroke-width=".6"/>
  <circle cx="854" cy="646" r="5.500" fill="#dce6fa"/>
  <rect x="853" y="641.500" width="2.200" height="2.200" fill="#1a3fb0"/>
  <path d="M852.300 645h2.900v5.500M852 650.500h4.500" stroke="#1a3fb0" stroke-width="1.800" fill="none"/>
  <rect x="996.500" y="640.500" width="15" height="15" fill="#F6F5E0" stroke="#B9B8A4"/>
  <path d="M1000.500 644.500l7 7M1007.500 644.500l-7 7" stroke="#000" stroke-width="2.200"/>
</svg>
<div class="a" style="left:872px;top:640px;height:12px;line-height:12px;font-size:12px;letter-spacing:1px;font-weight:bold;white-space:pre;font-family:'Liberation Sans','Noto Sans CJK SC',sans-serif">通信中心</div>
<div class="a" style="left:852px;top:662px;height:12px;line-height:12px;font-size:12px;white-space:pre;letter-spacing:0">使软件保持最新的简单方法。</div>
<div class="a" style="left:852px;top:680px;height:12px;line-height:12px;font-size:12px;white-space:pre;color:#0000E6;text-decoration:underline;text-underline-offset:1px">单击此处。</div>
</div></body></html>
